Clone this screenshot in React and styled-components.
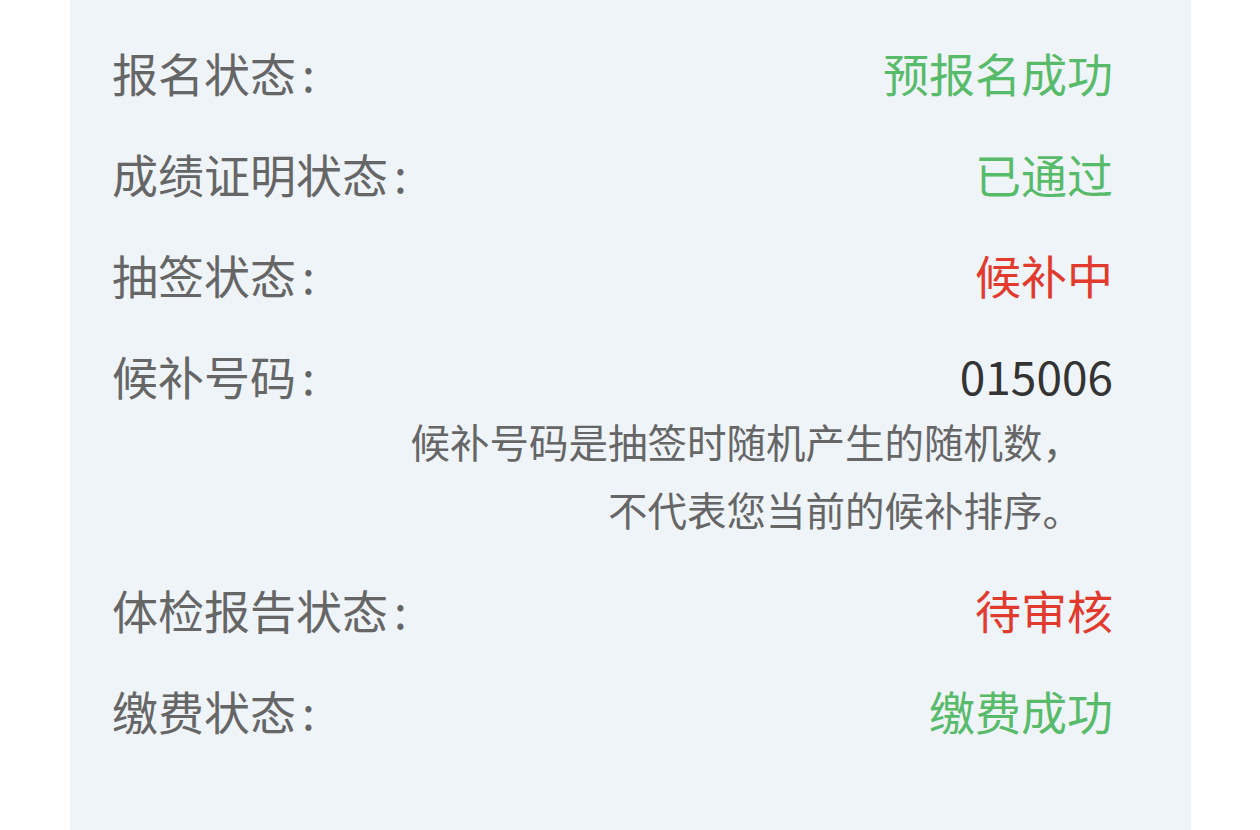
import React from "react";
import styled, { createGlobalStyle } from "styled-components";

const GlobalStyle = createGlobalStyle`
    html, body {
        margin: 0;
        padding: 0;
        background: #ffffff;
    }
    body {
        font-family: "Noto Sans CJK SC", "Noto Sans", sans-serif;
    }
`;

const Page = styled.div`
    width: 1260px;
    height: 830px;
    overflow: hidden;
    padding-left: 70px;
    box-sizing: border-box;
`;

const Panel = styled.div`
    width: 1121px;
    height: 830px;
    background: #eff4f9;
    padding: 21px 78px 0 42px;
    box-sizing: border-box;
`;

const Row = styled.div`
    display: flex;
    justify-content: space-between;
    align-items: center;
    height: 101px;
    margin-top: ${(p) => p.$gap || 0}px;
`;

const Label = styled.span`
    font-size: 46px;
    color: #666666;
    white-space: nowrap;
`;

const Colon = styled.span`
    margin-left: 6px;
`;

const Value = styled.span`
    font-size: 46px;
    white-space: nowrap;
    color: ${(p) =>
        p.$tone === "ok" ? "#58bb6a" : p.$tone === "warn" ? "#e23b2e" : "#333333"};
`;

const Note = styled.div`
    margin-top: -18px;
    padding-right: 31px;
    text-align: right;
    font-size: 39.5px;
    line-height: 68px;
    color: #666666;
`;

const rows = [
    { label: "报名状态", value: "预报名成功", tone: "ok" },
    { label: "成绩证明状态", value: "已通过", tone: "ok" },
    { label: "抽签状态", value: "候补中", tone: "warn" },
    {
        label: "候补号码",
        value: "015006",
        note: ["候补号码是抽签时随机产生的随机数，", "不代表您当前的候补排序。"],
    },
    { label: "体检报告状态", value: "待审核", tone: "warn", gap: 15 },
    { label: "缴费状态", value: "缴费成功", tone: "ok" },
];

export default function App() {
    return (
        <Page>
            <GlobalStyle />
            <Panel>
                {rows.map((r) => (
                    <React.Fragment key={r.label}>
                        <Row $gap={r.gap}>
                            <Label>
                                {r.label}
                                <Colon>:</Colon>
                            </Label>
                            <Value $tone={r.tone}>{r.value}</Value>
                        </Row>
                        {r.note && (
                            <Note>
                                {r.note.map((line) => (
                                    <div key={line}>{line}</div>
                                ))}
                            </Note>
                        )}
                    </React.Fragment>
                ))}
            </Panel>
        </Page>
    );
}
